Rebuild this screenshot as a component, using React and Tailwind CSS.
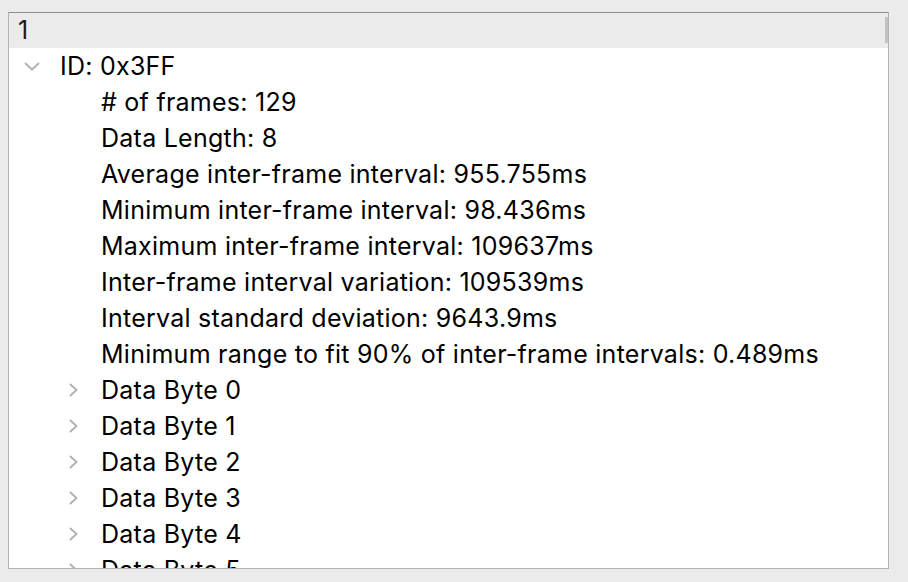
import React from "react";

const stats = [
  "# of frames: 129",
  "Data Length: 8",
  "Average inter-frame interval: 955.755ms",
  "Minimum inter-frame interval: 98.436ms",
  "Maximum inter-frame interval: 109637ms",
  "Inter-frame interval variation: 109539ms",
  "Interval standard deviation: 9643.9ms",
  "Minimum range to fit 90% of inter-frame intervals: 0.489ms",
];

function ChevronDown() {
  return (
    <svg width="16" height="9" viewBox="0 0 16 9" className="shrink-0">
      <path d="M1.5 1.5 L8 7.5 L14.5 1.5" fill="none" stroke="#b3b3b3" strokeWidth="2" strokeLinecap="round" strokeLinejoin="round" />
    </svg>
  );
}

function ChevronRight() {
  return (
    <svg width="9" height="14" viewBox="0 0 9 14" className="shrink-0">
      <path d="M1.5 1.5 L7.5 7 L1.5 12.5" fill="none" stroke="#b3b3b3" strokeWidth="2" strokeLinecap="round" strokeLinejoin="round" />
    </svg>
  );
}

export default function App() {
  return (
    <div className="w-[908px] h-[582px] bg-[#ebebeb] pt-[12px] pl-[8px] overflow-hidden" style={{ fontFamily: "Inter, 'Liberation Sans', sans-serif" }}>
      <div className="relative w-[881px] h-[557px] border border-[#b3b3b3] border-t-[#8c8c8c] bg-white overflow-hidden text-[25px] tracking-[0.25px] leading-none text-black">
        <div className="h-[35px] bg-[#ebebeb] flex items-center pl-[9px] text-[#1a1a1a]">1</div>
        <div className="absolute right-0 top-[4px] w-[3px] h-[26px] bg-[#c2c2c2]" />
        <div className="h-[36px] flex items-center">
          <div className="w-[51px] flex pl-[15px]"><ChevronDown /></div>
          <span>ID: 0x3FF</span>
        </div>
        {stats.map((s) => (
          <div key={s} className="h-[36px] flex items-center pl-[92px]">
            <span className="whitespace-nowrap">{s}</span>
          </div>
        ))}
        {[0, 1, 2, 3, 4, 5].map((i) => (
          <div key={i} className="h-[36px] flex items-center">
            <div className="w-[92px] flex pl-[60px]"><ChevronRight /></div>
            <span className="whitespace-nowrap">Data Byte {i}</span>
          </div>
        ))}
      </div>
    </div>
  );
}
